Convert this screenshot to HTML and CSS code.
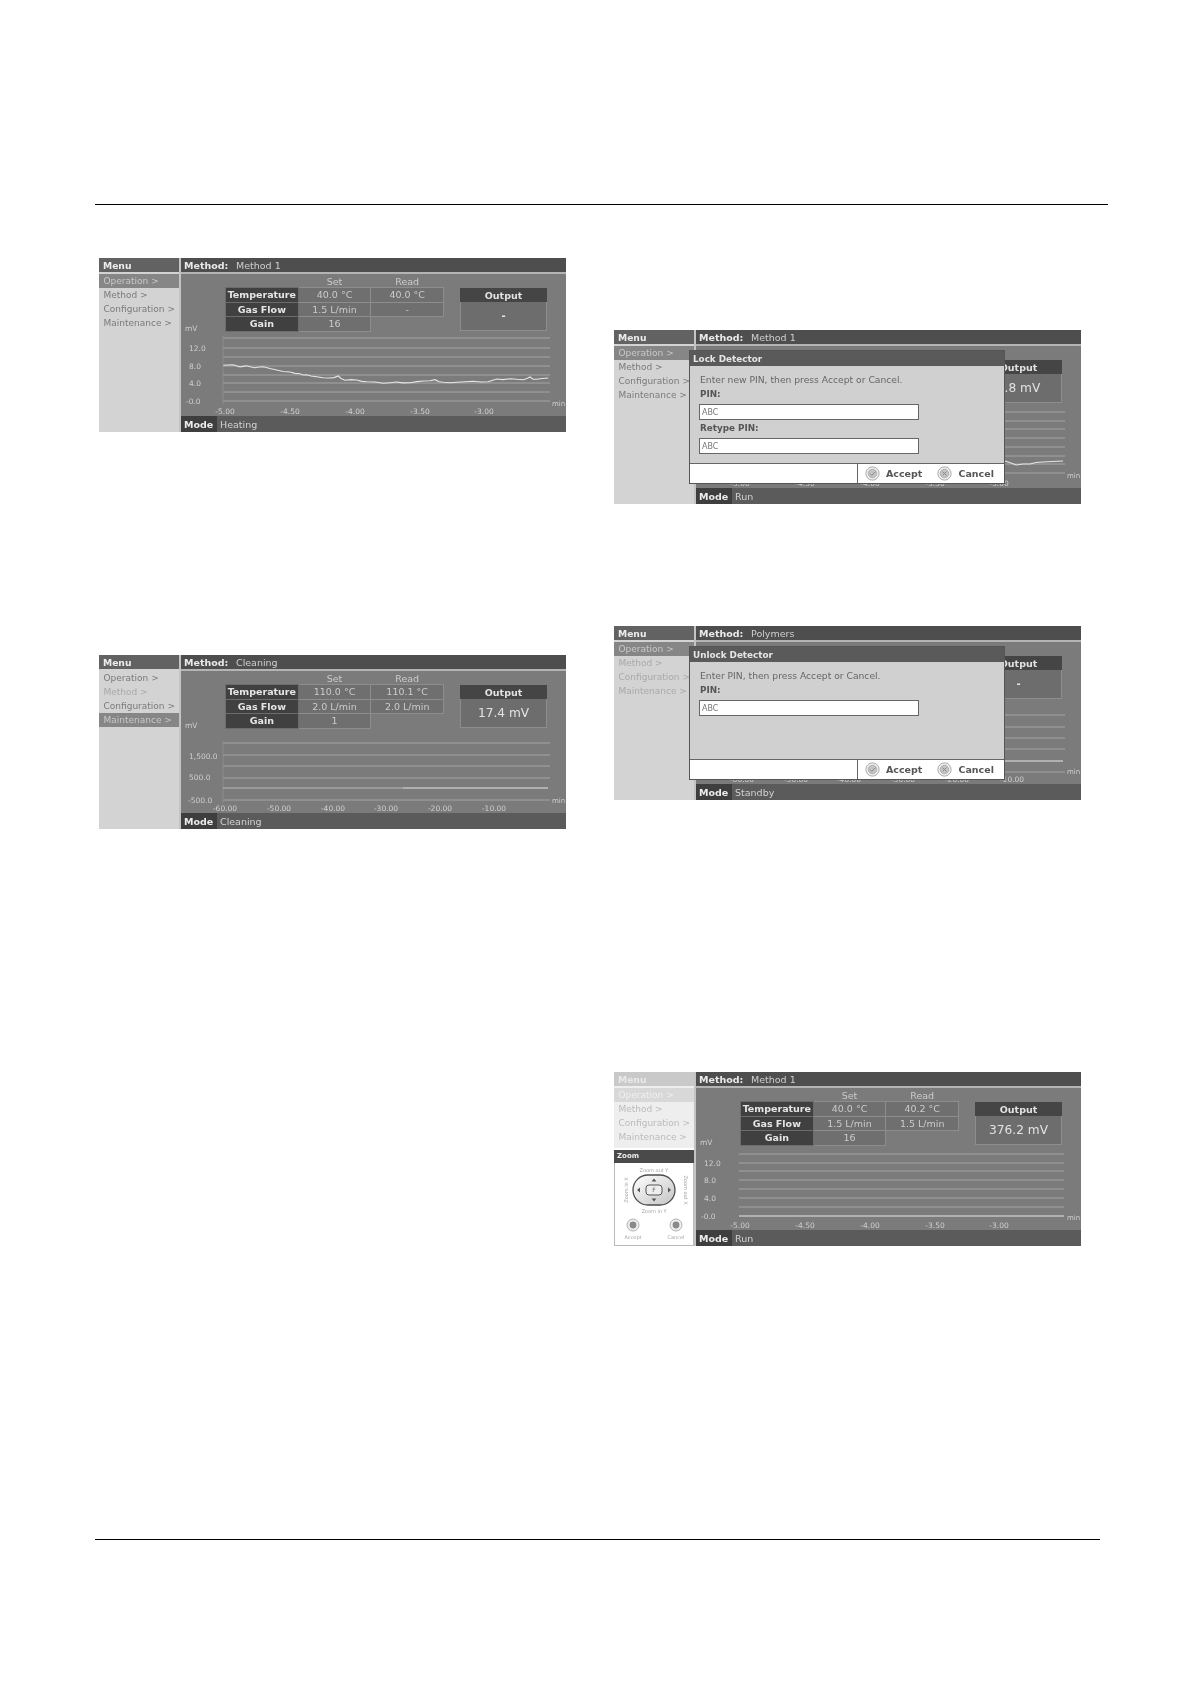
FILE: index.html
```html
<!DOCTYPE html>
<html lang="en">
<head>
<meta charset="utf-8">
<title>Detector screens</title>
<link rel="stylesheet" href="styles.css">
</head>
<body>
<div class="rule rule-top"></div>
<main class="columns">
<section class="col col-left">

<figure class="panel fig-heating">
  <aside class="menu">
    <div class="menu-head">Menu</div>
    <ul class="menu-list">
      <li class="sel">Operation &gt;</li><li>Method &gt;</li><li>Configuration &gt;</li><li>Maintenance &gt;</li>
    </ul>
  </aside>
  <div class="main">
    <header class="method"><b>Method:</b><span>Method 1</span></header>
    <div class="body">
      <div class="stats">
        <span class="unit">mV</span>
        <table class="params">
          <tr class="hd"><th></th><th>Set</th><th>Read</th></tr>
          <tr><th class="lab">Temperature</th><td>40.0 °C</td><td>40.0 °C</td></tr>
          <tr><th class="lab">Gas Flow</th><td>1.5 L/min</td><td>-</td></tr>
          <tr><th class="lab">Gain</th><td>16</td><td class="none"></td></tr>
        </table>
        <div class="output"><div class="out-head">Output</div><div class="out-val small">-</div></div>
      </div>
      <svg class="chart" viewBox="0 0 385 82" width="385" height="82">
        <g class="grid"><path d="M42 4H369M42 14H369M42 23H369M42 32H369M42 41H369M42 49H369M42 58H369M42 67H369"/></g>
        <path class="axis" d="M42 2V70"/>
        <polyline class="trace" points="42.3,31.3 47,31 52.3,30.7 56,32 59,33 62,32.400 65.700,31.700 70,33 74,33.700 78,33 82.300,32.700 89,34.500 95.700,36 102,37.500 109,38 114,39.400 119,39.700 122,41 125.700,40.700 130,42 135.700,42.700 142,43.800 149,44 153,43.600 157.300,42 160,44.500 164,46.300 170,45.600 175.700,46 181,47.400 185.700,47.700 194,48 202.300,49.300 209,48.700 215.700,48 222,48.900 229,48.700 236,47.600 242.300,47 249,46.800 254,45.700 258,47.800 262.300,48.300 269,48.800 275.700,48.300 284,47.800 292.300,47.300 300,48 307.300,47.700 311,46.400 315.700,45 322,45.600 329,44.700 336,45.300 342.300,45.700 346,44.600 349,43 352,45.200 355.700,45.300 361,44.500 367.300,44"/>
        <g class="ticks">
          <text x="8" y="17">12.0</text><text x="8" y="35">8.0</text><text x="8" y="52">4.0</text><text x="5" y="70">-0.0</text>
          <text x="371" y="72" class="min">min</text>
        </g>
        <g class="ticks mid">
          <text x="44" y="80">-5.00</text><text x="109" y="80">-4.50</text><text x="174" y="80">-4.00</text><text x="239" y="80">-3.50</text><text x="303" y="80">-3.00</text>
        </g>
      </svg>
    </div>
    <footer class="mode"><b>Mode</b><span>Heating</span></footer>
  </div>
</figure>

<figure class="panel fig-cleaning">
  <aside class="menu">
    <div class="menu-head">Menu</div>
    <ul class="menu-list">
      <li>Operation &gt;</li><li class="off">Method &gt;</li><li>Configuration &gt;</li><li class="sel">Maintenance &gt;</li>
    </ul>
  </aside>
  <div class="main">
    <header class="method"><b>Method:</b><span>Cleaning</span></header>
    <div class="body">
      <div class="stats">
        <span class="unit">mV</span>
        <table class="params">
          <tr class="hd"><th></th><th>Set</th><th>Read</th></tr>
          <tr><th class="lab">Temperature</th><td>110.0 °C</td><td>110.1 °C</td></tr>
          <tr><th class="lab">Gas Flow</th><td>2.0 L/min</td><td>2.0 L/min</td></tr>
          <tr><th class="lab">Gain</th><td>1</td><td class="none"></td></tr>
        </table>
        <div class="output"><div class="out-head">Output</div><div class="out-val">17.4 mV</div></div>
      </div>
      <svg class="chart" viewBox="0 0 385 82" width="385" height="82">
        <g class="grid"><path d="M42 12H369M42 24H369M42 35H369M42 47H369M42 69H369"/></g>
        <path class="axis" d="M42 10V72"/>
        <path class="trace dim" d="M42 57H222"/>
        <path class="trace" d="M222 57H367"/>
        <g class="ticks">
          <text x="8" y="28">1,500.0</text><text x="8" y="49">500.0</text><text x="7" y="72">-500.0</text>
          <text x="371" y="72" class="min">min</text>
        </g>
        <g class="ticks mid">
          <text x="44" y="80">-60.00</text><text x="98" y="80">-50.00</text><text x="152" y="80">-40.00</text><text x="205" y="80">-30.00</text><text x="259" y="80">-20.00</text><text x="313" y="80">-10.00</text>
        </g>
      </svg>
    </div>
    <footer class="mode"><b>Mode</b><span>Cleaning</span></footer>
  </div>
</figure>
</section>

<section class="col col-right">

<figure class="panel fig-lock">
  <aside class="menu">
    <div class="menu-head">Menu</div>
    <ul class="menu-list">
      <li class="sel">Operation &gt;</li><li>Method &gt;</li><li>Configuration &gt;</li><li>Maintenance &gt;</li>
    </ul>
  </aside>
  <div class="main">
    <header class="method"><b>Method:</b><span>Method 1</span></header>
    <div class="body">
      <div class="stats">
        <span class="unit">mV</span>
        <table class="params">
          <tr class="hd"><th></th><th>Set</th><th>Read</th></tr>
          <tr><th class="lab">Temperature</th><td>40.0 °C</td><td>40.2 °C</td></tr>
          <tr><th class="lab">Gas Flow</th><td>1.5 L/min</td><td>1.5 L/min</td></tr>
          <tr><th class="lab">Gain</th><td>16</td><td class="none"></td></tr>
        </table>
        <div class="output"><div class="out-head">Output</div><div class="out-val">4.8 mV</div></div>
      </div>
      <svg class="chart" viewBox="0 0 385 82" width="385" height="82">
        <g class="grid"><path d="M42 6H369M42 15H369M42 23H369M42 32H369M42 41H369M42 50H369M42 58H369M42 67H369"/></g>
        <polyline class="trace" points="300,56 309,55 315,57 320,59 327,58 334,58 340,56.500 347,56 356,55.500 367,55"/>
        <g class="ticks"><text x="371" y="72" class="min">min</text></g>
        <g class="ticks mid">
          <text x="44" y="80">-5.00</text><text x="109" y="80">-4.50</text><text x="174" y="80">-4.00</text><text x="239" y="80">-3.50</text><text x="303" y="80">-3.00</text>
        </g>
      </svg>
    </div>
    <footer class="mode"><b>Mode</b><span>Run</span></footer>
  </div>
  <div class="dialog">
    <div class="dlg-title">Lock Detector</div>
    <div class="dlg-body">
      <p class="dlg-msg">Enter new PIN, then press Accept or Cancel.</p>
      <label class="dlg-lab">PIN:</label>
      <div class="dlg-input">ABC</div>
      <label class="dlg-lab second">Retype PIN:</label>
      <div class="dlg-input">ABC</div>
    </div>
    <div class="dlg-foot">
      <div class="dlg-blank"></div>
      <div class="dlg-btns">
        <svg class="btn-ic" viewBox="0 0 14 14" width="15" height="15"><circle cx="7" cy="7" r="6.2" class="ic-o"/><circle cx="7" cy="7" r="4" class="ic-i"/><path d="M4.8 7.2l1.6 1.6 3-3.4" class="ic-m"/></svg>
        <b>Accept</b>
        <svg class="btn-ic second" viewBox="0 0 14 14" width="15" height="15"><circle cx="7" cy="7" r="6.2" class="ic-o"/><circle cx="7" cy="7" r="4" class="ic-i"/><path d="M5.2 5.2l3.6 3.6M8.8 5.2l-3.6 3.6" class="ic-m"/></svg>
        <b>Cancel</b>
      </div>
    </div>
  </div>
</figure>

<figure class="panel fig-unlock">
  <aside class="menu">
    <div class="menu-head">Menu</div>
    <ul class="menu-list">
      <li class="sel">Operation &gt;</li><li class="off">Method &gt;</li><li class="off">Configuration &gt;</li><li class="off">Maintenance &gt;</li>
    </ul>
  </aside>
  <div class="main">
    <header class="method"><b>Method:</b><span>Polymers</span></header>
    <div class="body">
      <div class="stats">
        <span class="unit">mV</span>
        <table class="params">
          <tr class="hd"><th></th><th>Set</th><th>Read</th></tr>
          <tr><th class="lab">Temperature</th><td>40.0 °C</td><td>40.0 °C</td></tr>
          <tr><th class="lab">Gas Flow</th><td>1.5 L/min</td><td>-</td></tr>
          <tr><th class="lab">Gain</th><td>16</td><td class="none"></td></tr>
        </table>
        <div class="output"><div class="out-head">Output</div><div class="out-val small">-</div></div>
      </div>
      <svg class="chart" viewBox="0 0 385 82" width="385" height="82">
        <g class="grid"><path d="M42 13H369M42 25H369M42 36H369M42 47H369M42 70H369"/></g>
        <path class="trace" d="M42 59H367"/>
        <g class="ticks"><text x="371" y="72" class="min">min</text></g>
        <g class="ticks mid">
          <text x="46" y="80">-60.00</text><text x="100" y="80">-50.00</text><text x="153" y="80">-40.00</text><text x="207" y="80">-30.00</text><text x="261" y="80">-20.00</text><text x="316" y="80">-10.00</text>
        </g>
      </svg>
    </div>
    <footer class="mode"><b>Mode</b><span>Standby</span></footer>
  </div>
  <div class="dialog">
    <div class="dlg-title">Unlock Detector</div>
    <div class="dlg-body">
      <p class="dlg-msg">Enter PIN, then press Accept or Cancel.</p>
      <label class="dlg-lab">PIN:</label>
      <div class="dlg-input">ABC</div>
    </div>
    <div class="dlg-foot">
      <div class="dlg-blank"></div>
      <div class="dlg-btns">
        <svg class="btn-ic" viewBox="0 0 14 14" width="15" height="15"><circle cx="7" cy="7" r="6.2" class="ic-o"/><circle cx="7" cy="7" r="4" class="ic-i"/><path d="M4.8 7.2l1.6 1.6 3-3.4" class="ic-m"/></svg>
        <b>Accept</b>
        <svg class="btn-ic second" viewBox="0 0 14 14" width="15" height="15"><circle cx="7" cy="7" r="6.2" class="ic-o"/><circle cx="7" cy="7" r="4" class="ic-i"/><path d="M5.2 5.2l3.6 3.6M8.8 5.2l-3.6 3.6" class="ic-m"/></svg>
        <b>Cancel</b>
      </div>
    </div>
  </div>
</figure>

<figure class="panel fig-zoom">
  <aside class="menu menu-faded">
    <div class="menu-top">
      <div class="menu-head">Menu</div>
      <ul class="menu-list">
        <li class="sel">Operation &gt;</li><li>Method &gt;</li><li>Configuration &gt;</li><li>Maintenance &gt;</li>
      </ul>
    </div>
    <div class="zoom-box">
      <div class="zoom-head">Zoom</div>
      <svg class="zoom-pad" viewBox="0 0 78 81" width="78" height="81">
        <defs>
          <linearGradient id="padfill" x1="0" y1="0" x2="1" y2="1">
            <stop offset="0" stop-color="#ffffff"/><stop offset="1" stop-color="#c4c4c4"/>
          </linearGradient>
        </defs>
        <text class="pad-t" x="39" y="9">Zoom out Y</text>
        <text class="pad-t" x="39" y="50">Zoom in Y</text>
        <text class="pad-t" transform="translate(69 27) rotate(90)">Zoom out X</text>
        <text class="pad-t" transform="translate(13 27) rotate(-90)">Zoom in X</text>
        <rect x="18" y="12" width="42" height="30" rx="15" class="pad-o"/>
        <rect x="31" y="22" width="16" height="10" rx="3" class="pad-c"/>
        <path class="pad-a" d="M39 15.5l2.4 3h-4.8zM39 38.5l2.4-3h-4.8zM22 27l3-2.4v4.800zM56 27l-3-2.400v4.800z"/>
        <text class="pad-f" x="39" y="29">F</text>
        <circle cx="18" cy="62" r="6" class="ic-o"/><circle cx="18" cy="62" r="3.400" class="pad-d"/>
        <circle cx="61" cy="62" r="6" class="ic-o"/><circle cx="61" cy="62" r="3.400" class="pad-d"/>
        <text class="pad-t" x="18" y="76">Accept</text>
        <text class="pad-t" x="61" y="76">Cancel</text>
      </svg>
    </div>
  </aside>
  <div class="main">
    <header class="method"><b>Method:</b><span>Method 1</span></header>
    <div class="body">
      <div class="stats">
        <span class="unit">mV</span>
        <table class="params">
          <tr class="hd"><th></th><th>Set</th><th>Read</th></tr>
          <tr><th class="lab">Temperature</th><td>40.0 °C</td><td>40.2 °C</td></tr>
          <tr><th class="lab">Gas Flow</th><td>1.5 L/min</td><td>1.5 L/min</td></tr>
          <tr><th class="lab">Gain</th><td>16</td><td class="none"></td></tr>
        </table>
        <div class="output"><div class="out-head">Output</div><div class="out-val">376.2 mV</div></div>
      </div>
      <svg class="chart" viewBox="0 0 385 82" width="385" height="82">
        <g class="grid"><path d="M43 6H368M43 15H368M43 23H368M43 32H368M43 41H368M43 50H368M43 59H368"/></g>
        <path class="trace" d="M43 68H368"/>
        <g class="ticks">
          <text x="8" y="18">12.0</text><text x="8" y="35">8.0</text><text x="8" y="53">4.0</text><text x="5" y="71">-0.0</text>
          <text x="371" y="72" class="min">min</text>
        </g>
        <g class="ticks mid">
          <text x="44" y="80">-5.00</text><text x="109" y="80">-4.50</text><text x="174" y="80">-4.00</text><text x="239" y="80">-3.50</text><text x="303" y="80">-3.00</text>
        </g>
      </svg>
    </div>
    <footer class="mode"><b>Mode</b><span>Run</span></footer>
  </div>
</figure>
</section>
</main>
<div class="rule rule-bottom"></div>
</body>
</html>
```
FILE: styles.css
```css
* { box-sizing: border-box; }
html, body { margin: 0; padding: 0; background: #fff; }
body { width: 1190px; height: 1684px; overflow: hidden; font-family: "DejaVu Sans", sans-serif; }

.rule { height: 1px; background: #000; margin-left: 95px; }
.rule-top { width: 1013px; margin-top: 204px; }
.rule-bottom { width: 1005px; }

.columns { display: flex; height: 1334px; }
.col { display: flex; flex-direction: column; width: 467px; }
.col-left { margin-left: 99px; }
.col-right { margin-left: 48px; }

.panel {
  position: relative; margin: 0; width: 467px; height: 174px; flex: none;
  display: flex; gap: 2px; background: #c4c4c4; overflow: hidden;
  filter: blur(0.55px);
}
.fig-heating { margin-top: 53px; }
.fig-cleaning { margin-top: 223px; }
.fig-lock { margin-top: 125px; }
.fig-unlock { margin-top: 122px; }
.fig-zoom { margin-top: 272px; }

/* menu column */
.menu { width: 80px; flex: none; background: #d3d3d3; }
.menu-head {
  height: 14px; background: #626262; color: #ececec;
  font-size: 9.2px; font-weight: 700; line-height: 16px; padding-left: 4px;
}
.menu-list { list-style: none; margin: 2px 0 0; padding: 0; }
.menu-list li {
  height: 14px; line-height: 15px; font-size: 9px; color: #7a7a7a;
  padding-left: 4.5px; white-space: nowrap; overflow: hidden;
}
.menu-list .sel { background: #868686; color: #c8c8c8; }
.menu-list .off { color: #a9a9a9; }

.menu-faded { display: flex; flex-direction: column; gap: 2px; background: #fff; }
.menu-top { height: 76px; background: #eeeeee; }
.menu-faded .menu-head { background: #c9c9c9; color: #e9e9e9; }
.menu-faded .menu-list .sel { background: #d8d8d8; color: #f0f0f0; }
.menu-faded .menu-list li { color: #bbb; }
.zoom-box { flex: 1; border: 1px solid #bbb; border-top: 0; background: #fff; }
.zoom-head {
  height: 13px; background: #4a4a4a; color: #eee; margin: 0 -1px;
  font-size: 7px; font-weight: 700; line-height: 13px; padding-left: 3px;
}
.zoom-pad { display: block; }
.pad-t { font-size: 5px; fill: #a5a5a5; text-anchor: middle; }
.pad-o { fill: url(#padfill); stroke: #4c4c4c; stroke-width: 1.3; }
.pad-c { fill: #eee; stroke: #555; stroke-width: 1; }
.pad-a { fill: #555; }
.pad-f { font-size: 6px; fill: #666; text-anchor: middle; }
.pad-d { fill: #8a8a8a; }

/* main column */
.main { flex: 1; min-width: 0; display: flex; flex-direction: column; background: #7b7b7b; }
.method {
  height: 16px; background: #4e4e4e; border-bottom: 2px solid #b4b4b4;
  color: #cfcfcf; font-size: 9.5px; line-height: 15px; padding-left: 3px; white-space: nowrap;
}
.method b { color: #eaeaea; display: inline-block; width: 52px; }
.body { height: 142px; flex: none; }
.stats { height: 60px; display: flex; align-items: flex-start; padding-left: 4px; }
.unit { font-size: 7.500px; color: #d0d0d0; width: 40px; margin-top: 50px; flex: none; }

.params {
  border-collapse: collapse; table-layout: fixed; width: 219px; flex: none;
  font-size: 9.500px; color: #cbcbcb; text-align: center;
}
.params th, .params td { padding: 0; height: 14.6px; line-height: 13px; font-weight: 400; }
.params td { background: #6f6f6f; border: 1px solid #8d8d8d; }
.params .lab { width: 72px; background: #404040; color: #e6e6e6; font-weight: 700; border: 1px solid #6c6c6c; }
.params .hd th { height: 13px; color: #cbcbcb; background: none; padding-top: 2px; line-height: 11px; }
.params .none { background: none; border: 0; }

.output {
  width: 87px; height: 43px; flex: none; margin: 14px 0 0 16px;
  background: #6d6d6d; border: 1px solid #8d8d8d;
  text-align: center; color: #e2e2e2;
}
.out-head { height: 14px; margin: -1px -1px 0; background: #454545; font-size: 9.500px; font-weight: 700; line-height: 15px; }
.out-val { font-size: 12.2px; line-height: 28px; }
.out-val.small { font-size: 10px; font-weight: 700; }

.chart { display: block; overflow: hidden; }
.grid path { stroke: #a5a5a5; stroke-width: 1; fill: none; }
.axis { stroke: #8d8d8d; fill: none; }
.trace { fill: none; stroke: #e6e6e6; stroke-width: 1.100; }
.trace.dim { stroke: #b8b8b8; }
.ticks text { font-family: "DejaVu Sans", sans-serif; font-size: 7.500px; fill: #cfcfcf; }
.ticks.mid text { text-anchor: middle; }
.ticks .min { font-size: 7px; }

.mode {
  height: 16px; flex: none; background: #5b5b5b; display: flex;
  color: #d2d2d2; font-size: 9.500px; line-height: 17px; white-space: nowrap;
}
.mode b { width: 36px; background: #3e3e3e; color: #ececec; padding-left: 3px; margin-right: 3px; }

/* dialog over the screen */
.dialog {
  position: absolute; left: 75px; top: 20px; width: 316px; height: 134px;
  display: flex; flex-direction: column;
  background: #d0d0d0; border: 1px solid #555;
}
.dlg-title {
  height: 15px; flex: none; background: #5a5a5a; color: #e6e6e6;
  font-size: 8.800px; font-weight: 700; line-height: 16px; padding-left: 3px;
}
.dlg-body { flex: 1; padding: 7.500px 0 0 10px; color: #666; font-size: 9.200px; }
.dlg-msg { margin: 0; line-height: 11px; }
.dlg-lab { display: block; margin-top: 4px; font-weight: 700; color: #555; line-height: 11px; height: 11px; font-size: 8.800px; }
.dlg-lab.second { margin-top: 3px; }
.dlg-input {
  width: 220px; height: 16px; margin: 4px 0 0 -1px; background: #fff; border: 1px solid #666;
  font-size: 8px; color: #777; line-height: 15px; padding-left: 2px;
}
.dlg-foot { height: 20px; flex: none; display: flex; background: #fff; border-top: 1px solid #666; }
.dlg-blank { width: 168px; border-right: 1px solid #666; flex: none; }
.dlg-btns { flex: 1; display: flex; align-items: center; padding-left: 7px; font-size: 9.500px; color: #555; }
.dlg-btns b { margin-left: 6px; }
.btn-ic { flex: none; }
.btn-ic.second { margin-left: 15px; }
.ic-o { fill: #efefef; stroke: #a0a0a0; stroke-width: 0.800; }
.ic-i { fill: #c4c4c4; stroke: #9a9a9a; stroke-width: 0.600; }
.ic-m { fill: none; stroke: #888; stroke-width: 0.900; }
```
